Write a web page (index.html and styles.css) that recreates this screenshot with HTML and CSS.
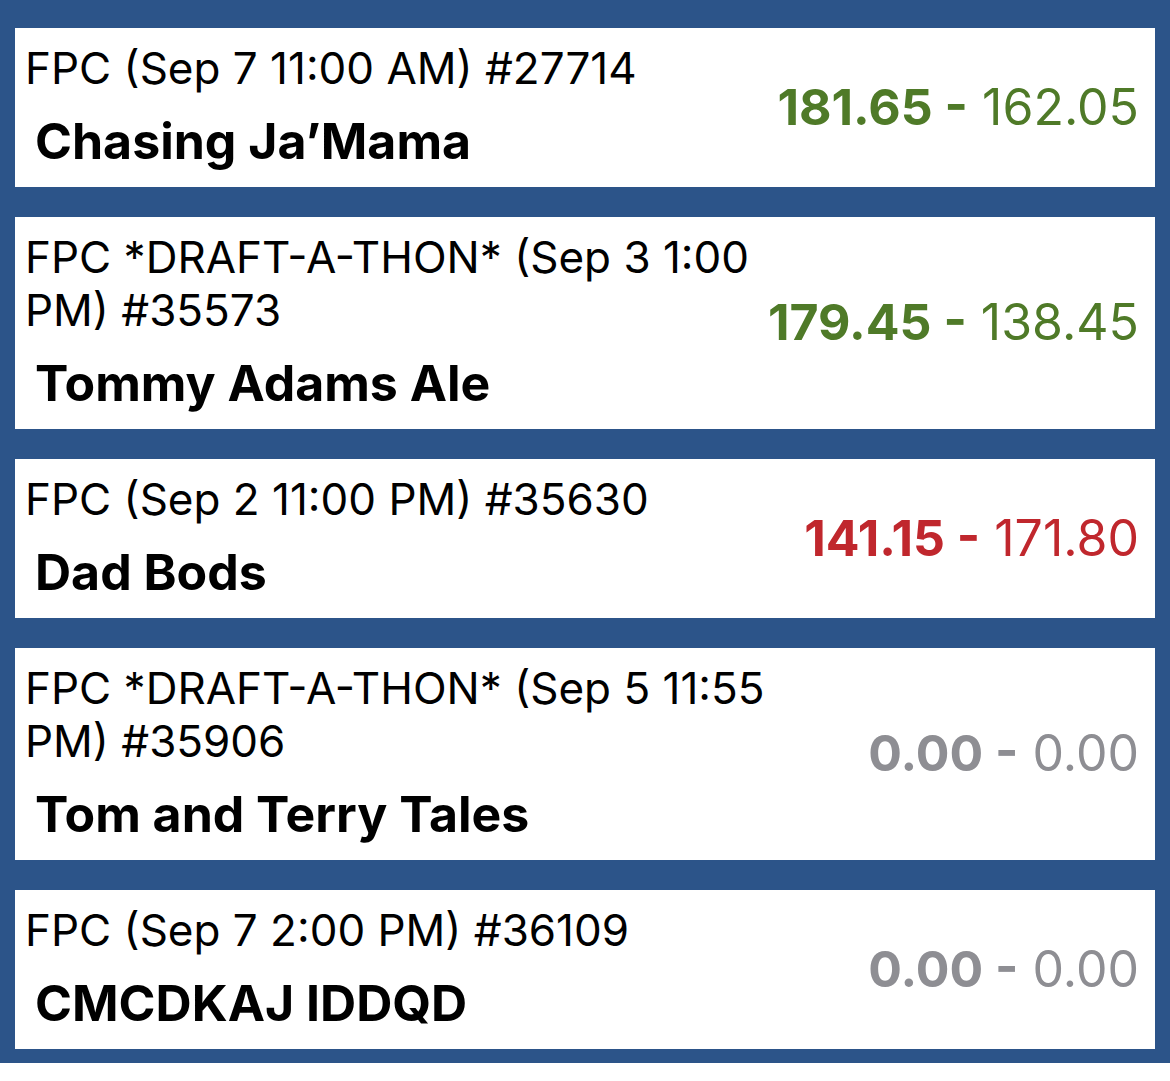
FILE: index.html
```html
<!DOCTYPE html>
<html>
<head>
<meta charset="utf-8">
<link rel="stylesheet" href="styles.css">
</head>
<body>
<div class="list">
  <div class="card">
    <div class="info">
      <div class="meta">FPC (Sep 7 11:00 AM) #27714</div>
      <div class="team">Chasing Ja’Mama</div>
    </div>
    <div class="score win"><b>181.65 -</b> 162.05</div>
  </div>
  <div class="card">
    <div class="info">
      <div class="meta">FPC *DRAFT-A-THON* (Sep 3 1:00 PM) #35573</div>
      <div class="team">Tommy Adams Ale</div>
    </div>
    <div class="score win"><b>179.45 -</b> 138.45</div>
  </div>
  <div class="card">
    <div class="info">
      <div class="meta">FPC (Sep 2 11:00 PM) #35630</div>
      <div class="team">Dad Bods</div>
    </div>
    <div class="score loss"><b>141.15 -</b> 171.80</div>
  </div>
  <div class="card">
    <div class="info">
      <div class="meta">FPC *DRAFT-A-THON* (Sep 5 11:55 PM) #35906</div>
      <div class="team">Tom and Terry Tales</div>
    </div>
    <div class="score pending"><b>0.00 -</b> 0.00</div>
  </div>
  <div class="card">
    <div class="info">
      <div class="meta">FPC (Sep 7 2:00 PM) #36109</div>
      <div class="team">CMCDKAJ IDDQD</div>
    </div>
    <div class="score pending"><b>0.00 -</b> 0.00</div>
  </div>
</div>
</body>
</html>
```
FILE: styles.css
```css
html, body {
  margin: 0;
  padding: 0;
  background: #ffffff;
}
body {
  font-family: Inter, "Liberation Sans", sans-serif;
  color: #000;
}
.list {
  background: #2c5489;
  padding: 28px 15px 14px 15px;
  display: flex;
  flex-direction: column;
  gap: 30px;
}
.card {
  background: #fff;
  display: flex;
  align-items: center;
  padding: 14px 16px 16px 10px;
}
.info {
  flex: 1 1 auto;
  min-width: 0;
  max-width: 748px;
}
.meta {
  font-size: 44px;
  line-height: 53px;
  font-weight: 400;
}
.team {
  font-size: 50px;
  line-height: 60px;
  font-weight: 700;
  margin-top: 16px;
  padding-left: 10px;
}
.score {
  flex: none;
  margin-left: auto;
  text-align: right;
  font-size: 50px;
  white-space: nowrap;
}
.score b {
  font-weight: 700;
}
.win { color: #4f7a28; }
.loss { color: #c0272d; }
.pending { color: #8e8e93; }
```
